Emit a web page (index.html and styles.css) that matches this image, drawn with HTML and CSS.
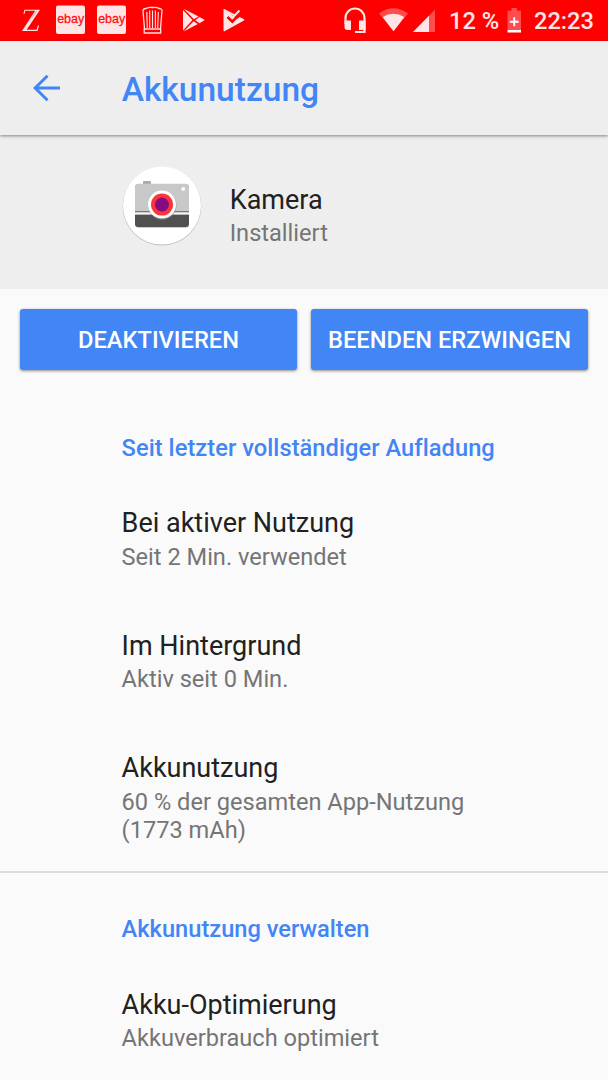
FILE: index.html
```html
<!DOCTYPE html>
<html lang="de">
<head>
<meta charset="utf-8">
<title>Akkunutzung</title>
<link rel="stylesheet" href="styles.css">
</head>
<body>
<div class="statusbar">
  <div class="notifications">
    <svg width="40" height="40" viewBox="0 0 40 40" fill="none" stroke="#ffe5e5"><path d="M13 14L13.800 10.200H28L14.500 30.400H26L27.500 25.500M25 10.500L12 30.400H15M26.600 10.500L13.200 30.400" stroke-width="1.100"/></svg>
    <svg width="40" height="40" viewBox="0 0 40 40"><rect x="5" y="5.500" width="29" height="28.500" rx="2" fill="#ffe5e5"/><text class="ebay" x="19.700" y="23" textLength="27" lengthAdjust="spacingAndGlyphs">ebay</text></svg>
    <svg width="40" height="40" viewBox="0 0 40 40"><rect x="5" y="5.500" width="29" height="28.500" rx="2" fill="#ffe5e5"/><text class="ebay" x="19.700" y="23" textLength="27" lengthAdjust="spacingAndGlyphs">ebay</text></svg>
    <svg width="40" height="40" viewBox="0 0 40 40" fill="none" stroke="#ffe0e0" stroke-width="1.300"><path d="M12.500 28.500L11 11Q11 8.500 14 8.500Q17 7 20.500 7.500Q25 6.800 27 8.500Q30.300 8.500 30 11L28.500 28.500M12.200 29H28.700V33H12.200Z"/><path d="M14.800 12L15.300 28M17.700 10.500V28M20.500 10.500V28M23.400 10.500V28M26.300 12L25.700 28" stroke-width="1.100"/></svg>
    <svg width="40" height="40" viewBox="0 0 40 40" fill="#ffe5e5"><path d="M10 10L19.500 20L10 30.500Z"/><path d="M10.700 8.700L25.500 16.500L21 19.300Z"/><path d="M26.500 17L31.800 20L26.500 23.300L22.300 20.200Z"/><path d="M20.600 21.300L24.800 24L10.700 31.500Z"/></svg>
    <svg width="40" height="40" viewBox="0 0 40 40"><path d="M10.500 9.500Q10.500 8.700 11.300 9.100L31 19.300Q31.700 20 31 20.600L11.500 31.200Q10.500 31.500 10.500 30.500Z" fill="#ffe5e5"/><path d="M18 14L20 17L29 8L32 11L28 16L24 19" fill="#f00"/><path d="M14.500 17L19.300 21.700L28 12.500" fill="none" stroke="#f00" stroke-width="2.600"/><path d="M18 15.500L20 17.200L26.500 10.500" fill="none" stroke="#ffe5e5" stroke-width="2"/></svg>
  </div>
  <div class="system">
    <svg class="headset" width="24" height="40" viewBox="343 0 24 40"><path d="M345.500 24V18A9.500 9.500 0 0 1 364.500 18V32H355" fill="none" stroke="#ffe5e5" stroke-width="2.200"/><path d="M344.500 20.500H351V30H347.500Q344.500 30 344.500 27ZM359 20.500H365.500V30H359Z" fill="#ffe5e5"/></svg>
    <svg class="wifi" width="30" height="40" viewBox="379 0 30 40"><path d="M379 13.500Q393.500 3 408 13.500L393.500 31.300Z" fill="#ff4d4d"/><path d="M382.700 17Q393.500 10.500 404.300 17L393.500 31.300Z" fill="#ffe5e5"/></svg>
    <svg class="signal" width="23" height="40" viewBox="413 0 23 40"><path d="M413 32L435 9.500V32Z" fill="#ff4d4d"/><path d="M413 32L429 15.700V32Z" fill="#ffe5e5"/></svg>
    <span class="percent">12 %</span>
    <svg class="battery" width="15" height="40" viewBox="507 0 15 40"><path d="M507.500 10.800H511.500V8H517V10.800H521V30H507.500Z" fill="#ff4d4d"/><path d="M507.500 30H521V32.500H507.500ZM513.300 17.300H515.200V20.800H518.700V22.700H515.200V26.200H513.300V22.700H509.800V20.800H513.300Z" fill="#fff"/></svg>
    <span class="clock">22:23</span>
  </div>
</div>
<header class="toolbar">
  <svg class="back" width="28" height="28" viewBox="0 0 28 28" fill="none" stroke="#4285f4" stroke-width="3"><path d="M27 14H3M14.500 1.700L2.100 14L14.500 26.300"/></svg>
  <h1>Akkunutzung</h1>
</header>
<section class="app">
  <svg class="camera" width="84" height="84" viewBox="120 164 84 84">
    <circle cx="162" cy="206.300" r="39.300" fill="#bdbdbd"/><circle cx="162" cy="205.600" r="39" fill="#fff"/>
    <path d="M143 184V182Q143 181 144 181H150Q151 181 151 182V184Z" fill="#aaa"/>
    <rect x="135" y="184" width="54" height="43.500" rx="3.500" fill="#999"/>
    <rect x="135" y="183.700" width="54" height="42.800" rx="3.500" fill="#c8c8c8"/>
    <path d="M135 214.500H189V223.500Q189 227 185.500 227H138.500Q135 227 135 223.500Z" fill="#505050"/>
    <path d="M135 211.300H189V214.500H135Z" fill="#5c5c5c"/><path d="M135 212.300H189V214.500H135Z" fill="#f5f5f5"/>
    <circle cx="162.300" cy="205.600" r="14.200" fill="#888" opacity=".6"/><circle cx="162" cy="204.600" r="14" fill="#fff"/><circle cx="162" cy="204.600" r="11" fill="#fb3437"/><circle cx="162" cy="204.600" r="7" fill="#850b80"/>
    <circle cx="183.200" cy="188.900" r="1.900" fill="#fff"/>
  </svg>
  <div class="entry"><div class="name">Kamera</div><div class="detail">Installiert</div></div>
</section>
<div class="actions"><button>DEAKTIVIEREN</button><button>BEENDEN ERZWINGEN</button></div>
<section class="group usage">
  <h2>Seit letzter vollständiger Aufladung</h2>
  <div class="entry"><div class="name">Bei aktiver Nutzung</div><div class="detail">Seit 2 Min. verwendet</div></div>
  <div class="entry"><div class="name">Im Hintergrund</div><div class="detail">Aktiv seit 0 Min.</div></div>
  <div class="entry"><div class="name">Akkunutzung</div><div class="detail">60 % der gesamten App-Nutzung<br>(1773 mAh)</div></div>
</section>
<section class="group manage">
  <h2>Akkunutzung verwalten</h2>
  <div class="entry"><div class="name">Akku-Optimierung</div><div class="detail">Akkuverbrauch optimiert</div></div>
</section>
</body>
</html>
```
FILE: styles.css
```css
* { box-sizing: border-box; }
body { margin: 0; width: 608px; height: 1080px; overflow: hidden; background: #fafafa; font-family: Roboto, sans-serif; color: #212121; font-variant-ligatures: none; }
svg { display: block; flex: none; }
h1, h2 { margin: 0; font-weight: 500; color: #4285f4; white-space: nowrap; }
.statusbar { height: 40.5px; background: #f00; display: flex; justify-content: space-between; }
.notifications { display: flex; gap: 0.5px; padding-left: 10.5px; }
.ebay { font: 13.5px "Liberation Sans", sans-serif; fill: #ff1010; stroke: #ff1010; stroke-width: 0.3px; text-anchor: middle; }
.system { display: flex; width: 265px; color: #ffe5e5; font-size: 23.65px; font-weight: 500; line-height: 42px; white-space: nowrap; }
.wifi { margin-left: 12px; }
.signal { margin-left: 4px; }
.percent { width: 57px; margin-left: 13px; }
.battery { margin-left: 1px; }
.clock { margin-left: 12px; }
.toolbar { position: relative; height: 94.5px; display: flex; align-items: center; background: #eee; box-shadow: 0 1px 3px rgba(0, 0, 0, 0.45); }
.back { margin-left: 33px; }
h1 { margin: 4px 0 0 60.7px; font-size: 33.5px; line-height: 40px; }
.app { height: 153.5px; background: #eee; display: flex; padding: 29px 0 0 120px; }
.app .entry { margin: 19.7px 0 0 25.7px; }
.actions { display: flex; gap: 14px; padding: 20px 20px 0; }
button { flex: 1; height: 61px; padding: 1.5px 0 0; border: 0; border-radius: 3px; background: #4285f4; color: #fff; font: 500 23.65px Roboto, sans-serif; white-space: nowrap; box-shadow: 0 1px 3px rgba(0, 0, 0, 0.45); }
.group { padding-left: 121.6px; }
.usage { height: 503px; padding-top: 64px; border-bottom: 2px solid #dedede; }
.usage h2 { letter-spacing: 0.05px; }
.manage { padding-top: 42.5px; }
h2 { font-size: 23.65px; line-height: 28px; margin-bottom: 45.5px; }
.name { font-size: 27px; line-height: 32px; }
.detail { margin-top: 4.8px; font-size: 23.6px; line-height: 27.7px; color: #757575; }
.group .entry + .entry { margin-top: 58.2px; }
```
